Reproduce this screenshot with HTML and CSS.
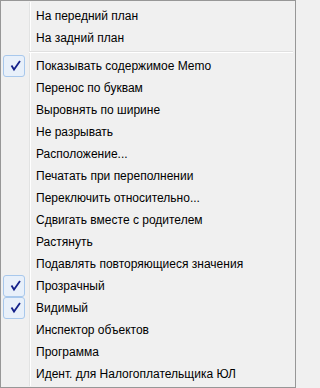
FILE: index.html
```html
<!DOCTYPE html>
<html lang="ru">
<head>
<meta charset="utf-8">
<title>Menu</title>
<link rel="stylesheet" href="styles.css">
</head>
<body>
<div class="menu">
  <div class="item"><span class="gutter"></span><span class="label">На передний план</span></div>
  <div class="item"><span class="gutter"></span><span class="label">На задний план</span></div>
  <div class="sep"></div>
  <div class="item"><span class="gutter checked"><svg viewBox="0 0 22 22" width="22" height="22"><path d="M8.5 10.5 L11 14.5 L17 6" fill="none" stroke="#14218a" stroke-width="1.8" stroke-linejoin="miter" stroke-linecap="butt"/></svg></span><span class="label">Показывать содержимое Memo</span></div>
  <div class="item"><span class="gutter"></span><span class="label">Перенос по буквам</span></div>
  <div class="item"><span class="gutter"></span><span class="label">Выровнять по ширине</span></div>
  <div class="item"><span class="gutter"></span><span class="label">Не разрывать</span></div>
  <div class="item"><span class="gutter"></span><span class="label">Расположение...</span></div>
  <div class="item"><span class="gutter"></span><span class="label">Печатать при переполнении</span></div>
  <div class="item"><span class="gutter"></span><span class="label">Переключить относительно...</span></div>
  <div class="item"><span class="gutter"></span><span class="label">Сдвигать вместе с родителем</span></div>
  <div class="item"><span class="gutter"></span><span class="label">Растянуть</span></div>
  <div class="item"><span class="gutter"></span><span class="label">Подавлять повторяющиеся значения</span></div>
  <div class="item"><span class="gutter checked"><svg viewBox="0 0 22 22" width="22" height="22"><path d="M8.5 10.5 L11 14.5 L17 6" fill="none" stroke="#14218a" stroke-width="1.8" stroke-linejoin="miter" stroke-linecap="butt"/></svg></span><span class="label">Прозрачный</span></div>
  <div class="item"><span class="gutter checked"><svg viewBox="0 0 22 22" width="22" height="22"><path d="M8.5 10.5 L11 14.5 L17 6" fill="none" stroke="#14218a" stroke-width="1.8" stroke-linejoin="miter" stroke-linecap="butt"/></svg></span><span class="label">Видимый</span></div>
  <div class="item"><span class="gutter"></span><span class="label">Инспектор объектов</span></div>
  <div class="item"><span class="gutter"></span><span class="label">Программа</span></div>
  <div class="item"><span class="gutter"></span><span class="label">Идент. для Налогоплательщика ЮЛ</span></div>
</div>
</body>
</html>
```

FILE: styles.css
```css
html, body {
  margin: 0;
  padding: 0;
  background: #f0f0f0;
}

.menu {
  box-sizing: border-box;
  width: 296px;
  height: 388px;
  border: 1px solid #979797;
  padding: 4px 0 2px 0;
  background-color: #f0f0f0;
  background-image: linear-gradient(to right, transparent 28px, #e2e3e3 28px, #e2e3e3 29px, #ffffff 29px, #ffffff 30px, transparent 30px);
  background-repeat: no-repeat;
  background-size: 100% calc(100% - 2px);
  background-position: 0 1px;
  font-family: "Liberation Sans", Arial, sans-serif;
  font-size: 12px;
  color: #000;
}

.item {
  display: flex;
  align-items: center;
  height: 22px;
}

.gutter {
  box-sizing: border-box;
  flex: none;
  width: 22px;
  height: 22px;
  margin-left: 2px;
  margin-right: 11px;
}

.gutter svg {
  display: block;
}

.checked {
  border: 1px solid #a8c8ec;
  border-radius: 3px;
  background: #e8f0fa;
}

.checked svg {
  margin: -1px;
}

.label {
  white-space: nowrap;
  line-height: 22px;
}

.sep {
  height: 0;
  margin: 2px 2px 2px 28px;
  border-top: 1px solid #e0e0e0;
  border-bottom: 1px solid #ffffff;
}
```
